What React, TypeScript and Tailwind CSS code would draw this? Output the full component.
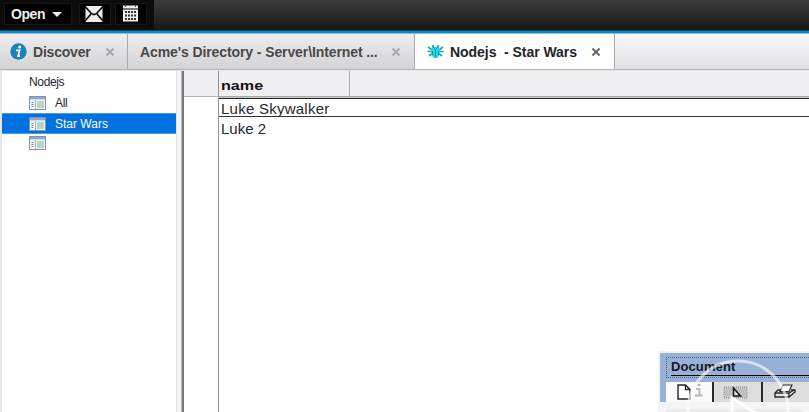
import React from "react";

function ViewIcon() {
  return (
    <svg width="17" height="14" viewBox="0 0 17 14" className="block shrink-0">
      <rect x="0.5" y="0.5" width="16" height="13" fill="#f4f6fa" stroke="#8292ae" />
      <rect x="1" y="1" width="15" height="2.5" fill="#86aad0" />
      <rect x="1" y="3.5" width="15" height="1" fill="#dbe6f2" />
      <path d="M6.5 4v9" stroke="#a5b0c4" />
      <path d="M2.500 6.5h2M2.500 8.5h2M2.500 10.5h2" stroke="#7f8794" />
      <rect x="8" y="5" width="7" height="7" fill="#b9d7c0" />
    </svg>
  );
}

function Close({ color }: { color: string }) {
  return (
    <svg width="8" height="8" viewBox="0 0 8 8" className="block shrink-0">
      <path d="M0.500 0.500l7 7M7.500 0.500l-7 7" stroke={color} strokeWidth="2" />
    </svg>
  );
}

function TopBar() {
  return (
    <div className="flex h-[30px] w-full bg-gradient-to-b from-[#3c3c3d] to-[#191819]">
      <div className="flex h-[30px] w-[154px] bg-[#0c0c0c] pl-1 pt-[3px]">
        <div className="flex h-[22px] w-[68px] items-center border border-[#171717] bg-black pl-[6px]">
          <span className="w-[35px] text-[14px] font-bold leading-[20px] tracking-[-0.45px] text-[#eeeeee]">Open</span>
          <svg width="10" height="5" viewBox="0 0 10 5" className="ml-[6px]">
            <path d="M0 0h10L5 5z" fill="#eee" />
          </svg>
        </div>
        <div className="ml-[7px] flex h-[22px] w-[32px] border border-[#171717] bg-black pl-[5px] pt-[2px]">
          <svg width="18" height="16" viewBox="0 0 18 16">
            <rect x="0.5" width="17" height="16" fill="#eee" />
            <path d="M0 0.500l6 6.500Q9 10 12 7l6-6.500M0 15l6-7M18 15l-6-7" fill="none" stroke="#0b0b0b" strokeWidth="1.700" />
          </svg>
        </div>
        <div className="ml-[4px] flex h-[22px] w-[32px] border border-[#171717] bg-black pl-[6px] pt-[1px]">
          <svg width="17" height="17" viewBox="0 0 17 17">
            <rect x="1" y="0.500" width="15" height="3" fill="#eee" />
            <path d="M3.500 0v2M13.500 0v2" stroke="#555" />
            <path d="M1 4.500h15v12H1z" fill="#eee" />
            <path d="M3 6h2v2H3zM6 6h2v2H6zM9 6h2v2H9zM12 6h2v2h-2zM3 9.500h2v2H3zM6 9.500h2v2H6zM9 9.500h2v2H9zM12 9.500h2v2h-2zM3 13h2v2H3zM6 13h2v2H6zM9 13h2v2H9zM12 13h2v2h-2z" fill="#333" />
          </svg>
        </div>
      </div>
    </div>
  );
}

function Tabs() {
  return (
    <div className="flex h-[35px] bg-gradient-to-b from-[#f8f7fc] to-[#e2e2e4] text-[14px] font-bold leading-[34px] text-[#4b4848]">
      <div className="flex w-[128px] items-center border-r border-[#a9a9a9] bg-gradient-to-b from-[#eeeef1] to-[#d3d2d5] pl-[10px]">
        <svg width="17" height="17" viewBox="0 0 17 17" className="block shrink-0">
          <circle cx="8.500" cy="8.500" r="8.200" fill="#1b82bd" />
          <circle cx="9.700" cy="4" r="1.500" fill="white" />
          <path d="M6 7.300h3.500L8.200 13h1.800" fill="none" stroke="white" strokeWidth="1.800" />
        </svg>
        <span className="ml-[6px] w-[58px] whitespace-nowrap tracking-[-0.2px]">Discover</span>
        <span className="ml-[15px]"><Close color="#a9a8a9" /></span>
      </div>
      <div className="flex w-[287px] items-center border-r border-[#a9a9a9] bg-gradient-to-b from-[#eeeef1] to-[#d3d2d5] pl-[12px]">
        <span className="w-[240px] shrink-0 whitespace-pre tracking-[-0.1px]">Acme's Directory - Server\Internet ...</span>
        <span className="ml-[12px]"><Close color="#a9a8a9" /></span>
      </div>
      <div className="flex w-[200px] items-center border-r border-[#a9a9a9] bg-white pl-[12px] text-[#252329]">
        <svg width="17" height="15" viewBox="0 0 17 15" className="block shrink-0">
          <path d="M1 3l4 3M16 3l-4 3M0.500 7.500H16.500M2 12l4-3M15 12l-4-3M6 3V1M11 3V1" stroke="#2a9bad" strokeWidth="1.600" />
          <path d="M5 3h7l1 3-1 6-2 2H7l-2-2-1-6z" fill="#19dcef" />
          <path d="M5.500 2.500l3 3 3-3M8.500 5.500v8M5.500 7v4M11.500 7v4" stroke="#168fa3" fill="none" />
        </svg>
        <span className="ml-[6px] w-[128px] whitespace-pre tracking-[-0.05px]">Nodejs  - Star Wars</span>
        <span className="ml-[14px]"><Close color="#656467" /></span>
      </div>
    </div>
  );
}

function Sidebar() {
  return (
    <div className="flex h-full w-[184px] shrink-0 border-l-2 border-[#e7e6ea] text-[12px] tracking-[-0.35px] text-[#27252d]">
      <div className="w-[174px] bg-white">
        <div className="h-[22px] pl-[27px] leading-[22px]">Nodejs</div>
        <div className="flex h-[20px] items-center pl-[27px]"><ViewIcon /><span className="ml-[9px]">All</span></div>
        <div className="flex h-[21px] items-center border-y border-[#4a9af0] bg-[#0072df] pl-[27px] text-white"><ViewIcon /><span className="ml-[9px] tracking-[0px]">Star Wars</span></div>
        <div className="flex h-[18px] items-center pl-[27px]"><ViewIcon /></div>
      </div>
      <div className="w-[5px] border-l border-[#e2e1e4] bg-[#f5f4f7]" />
      <div className="w-px bg-[#b8b8b8]" />
      <div className="w-[2px] bg-[#77777a]" />
    </div>
  );
}

function TableView() {
  return (
    <div className="flex min-w-0 grow">
      <div className="w-[34px] shrink-0 bg-white">
        <div className="h-[26px] border-b border-[#b5b4b6] bg-[#f0eff1]" />
      </div>
      <div className="grow border-l border-[#929294]">
        <div className="flex h-[26px] border-b border-[#a9a8aa] bg-[#f0eff1]">
          <div className="w-[131px] border-r border-[#acabad] pl-[2px] pt-[4px] text-[13px] font-bold leading-[21px] text-[#151317]">
            <span className="inline-block origin-left scale-x-[1.24]">name</span>
          </div>
        </div>
        <div className="h-[2px] border-b border-[#252528] bg-[#c9c9ca]" />
        <div className="h-[18px] border-b border-[#353538] pl-[2px] text-[15px] leading-[19px] tracking-[0.25px] text-[#29262e]">Luke Skywalker</div>
        <div className="h-[24px] pl-[2px] text-[15px] leading-[24px] text-[#29262e]">Luke 2</div>
      </div>
    </div>
  );
}

function DocumentPanel() {
  return (
    <div className="absolute left-[658px] top-[351px] h-[61px] w-[151px] overflow-hidden border-l-2 border-t-2 border-[#f3f3f4] bg-[#f5f5f6]">
      <div className="h-[49px] bg-[#98b1d7] pl-[6px] pt-[4px]">
        <div className="h-[21px] border-y border-l border-dotted border-[#54617a] pl-[4px]">
          <div className="h-[18px] border-b border-black text-[13px] font-bold leading-[18px] tracking-[0.1px] text-[#14161b]">Document</div>
        </div>
        <div className="mt-[4px] flex h-[20px] bg-[#dddddd]">
          <div className="w-[48px] border-r-2 border-[#292929] bg-[#fafafa] pl-[10px] pt-[2px]">
            <svg width="28" height="17" viewBox="0 0 28 17">
              <path d="M2 1h7.500l4.500 4.500V15H2zM9.500 1v4.500H14" fill="white" stroke="#242424" strokeWidth="1.400" />
              <path d="M21.500 1h3M20 5h3.500v6M19 11.500h7.500" stroke="#b6b6b6" strokeWidth="1.800" fill="none" />
            </svg>
          </div>
          <div className="w-[49px] border-r-2 border-[#292929] pl-[9px] pt-[4px]">
            <svg width="26" height="13" viewBox="0 0 26 13">
              <rect x="1" y="1" width="23" height="11" fill="#c8c8c8" stroke="#888" strokeDasharray="1 1" />
              <path d="M3 3h20M2 5h21M3 7h20M2 9h21M3 11h20" stroke="#aaa" strokeDasharray="1 1" />
              <path d="M10.500 2v8h7z" fill="#ddd" stroke="#171717" strokeWidth="1.500" />
            </svg>
          </div>
          <div className="pl-[11px] pt-[2px]">
            <svg width="24" height="16" viewBox="0 0 24 16">
              <path d="M6 6H4L1 9v4h14l6-5V6h-4" fill="#e2e2e2" stroke="#292929" strokeWidth="1.400" />
              <path d="M1 9h14l5-3M15 9v4" fill="none" stroke="#292929" strokeWidth="1.300" />
              <path d="M6 7.500L9 1h9l-3 6.500z" fill="#f8f8f8" stroke="#292929" strokeWidth="1.200" />
            </svg>
          </div>
        </div>
      </div>
      <div className="mx-[6px] mt-[7px] h-[4px] bg-[#ececee]" />
      <svg width="149" height="59" viewBox="0 0 149 59" className="absolute left-0 top-0">
        <circle cx="78" cy="58" r="50" fill="none" stroke="white" strokeOpacity="0.620" strokeWidth="3" />
        <path d="M72 66V45l30 19" fill="none" stroke="white" strokeWidth="3" />
      </svg>
    </div>
  );
}

export default function App() {
  return (
    <div className="relative flex h-[412px] w-[809px] flex-col overflow-hidden bg-white" style={{ fontFamily: '"Liberation Sans", Arial, sans-serif' }}>
      <TopBar />
      <div className="h-px bg-[#114b70]" />
      <div className="h-[2px] bg-[#1c81bd]" />
      <div className="h-px bg-[#7dc0eb]" />
      <Tabs />
      <div className="h-px shrink-0 bg-[#b1b0b2]" />
      <div className="h-px shrink-0 bg-[#e9e8eb]" />
      <div className="flex min-h-0 grow">
        <Sidebar />
        <TableView />
      </div>
      <DocumentPanel />
    </div>
  );
}
